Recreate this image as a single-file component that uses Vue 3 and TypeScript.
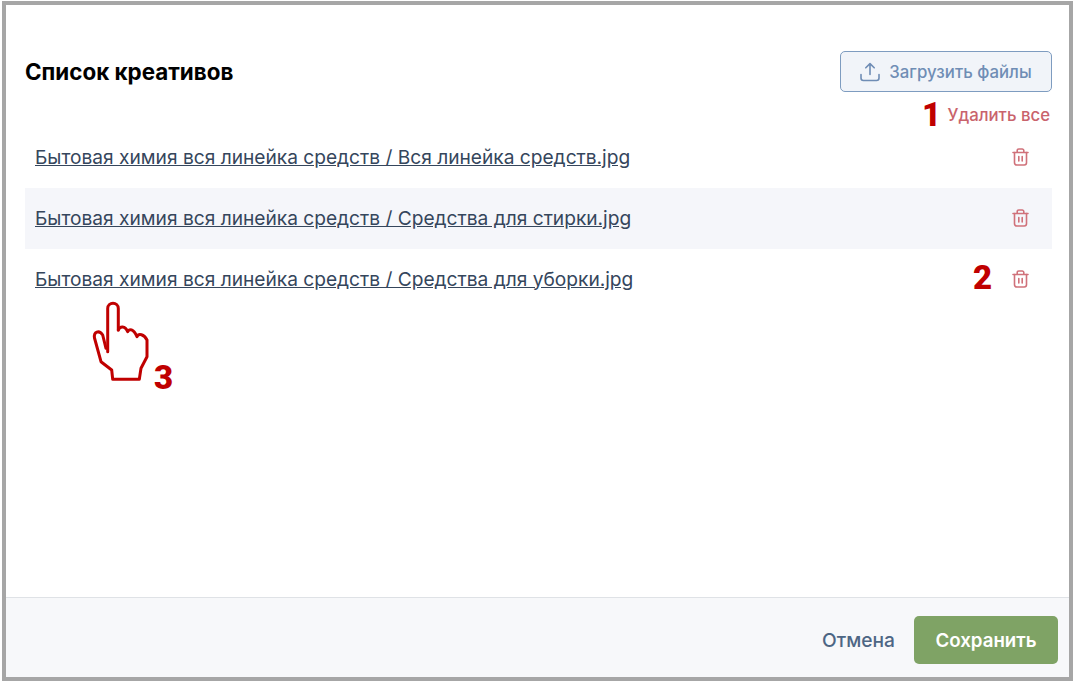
<script setup lang="ts">
const files = [
  'Бытовая химия вся линейка средств / Вся линейка средств.jpg',
  'Бытовая химия вся линейка средств / Средства для стирки.jpg',
  'Бытовая химия вся линейка средств / Средства для уборки.jpg',
]
</script>

<template>
  <div class="frame">
    <div class="content">
      <div class="head">
        <h2 class="title">Список креативов</h2>
        <button class="upload">
          <svg width="20" height="20" viewBox="0 0 20 20" fill="none" stroke="currentColor" stroke-width="1.6" stroke-linecap="round" stroke-linejoin="round">
            <path d="M10 12.5V1.8M5.8 5.8 10 1.6l4.2 4.2" />
            <path d="M1 12.5v3.6A2.4 2.4 0 0 0 3.4 18.5h13.2a2.4 2.4 0 0 0 2.4-2.4v-3.6" />
          </svg>
          Загрузить файлы
        </button>
      </div>
      <div class="remove-row"><a class="remove-all">Удалить все</a></div>
      <ul class="list">
        <li v-for="file in files" :key="file" class="row">
          <a class="file">{{ file }}</a>
          <svg class="trash" width="17" height="18" viewBox="0 0 17 18" fill="none" stroke="currentColor" stroke-width="1.6" stroke-linecap="round" stroke-linejoin="round">
            <path d="M1 4.500h15M5.200 4.500V2.600A1.600 1.600 0 0 1 6.800 1h3.400a1.600 1.600 0 0 1 1.600 1.600v1.900" />
            <path d="M2.500 4.500v10.300A2.200 2.200 0 0 0 4.700 17h7.600a2.200 2.200 0 0 0 2.200-2.200V4.500" />
            <path d="M6.800 8.500v4.500M10.200 8.500v4.500" />
          </svg>
        </li>
      </ul>
    </div>
    <div class="footer">
      <button class="cancel">Отмена</button>
      <button class="save">Сохранить</button>
    </div>

    <!-- пометки поверх скриншота -->
    <span class="mark mark-1">1</span>
    <span class="mark mark-2">2</span>
    <span class="mark mark-3">3</span>
    <svg class="hand" width="56" height="80" viewBox="0 0 56 80" fill="none" stroke="#c00000" stroke-width="3" stroke-linecap="round" stroke-linejoin="round">
      <path d="M13.700 49.700V6.500C13.700 -.5 24.300 -.5 24.300 6.500V28" />
      <path d="M24.300 28C26 24 31 23.500 33.700 29.700C35 26.500 39.500 26.500 43 34.700C44.500 31 50 32 53 38V54.700L47 66.300 45.300 77.300H18.700L17.700 68 7 59.700 .5 36C-.5 30 5 27.500 8.700 33L12 46.300" />
    </svg>
  </div>
</template>

<style scoped>
.frame {
  position: relative;
  box-sizing: border-box;
  display: flex;
  flex-direction: column;
  width: 1071px;
  height: 680px;
  margin: 1px 0 0 2px;
  border: 4px solid #a6a6a6;
  background: #fff;
  font-family: Inter, "Noto Sans", sans-serif;
}
.content {
  flex: 1;
  padding: 46px 17px 0 19px;
}
.head {
  display: flex;
  align-items: center;
  justify-content: space-between;
}
.title {
  margin: 0;
  font-size: 22.4px;
  line-height: 41px;
  font-weight: 700;
  color: #000;
}
.upload {
  display: flex;
  align-items: center;
  justify-content: center;
  gap: 9px;
  box-sizing: border-box;
  width: 212px;
  height: 41px;
  border: 1px solid #7e9cc0;
  border-radius: 5px;
  background: #f1f4f9;
  color: #6f8db5;
  font: 500 16.8px Inter, sans-serif;
}
.remove-row {
  display: flex;
  justify-content: flex-end;
  padding: 14px 2px 0 0;
}
.remove-all {
  font-size: 16.8px;
  line-height: 18px;
  font-weight: 500;
  color: #c9636c;
}
.list {
  margin: 3px 0 0;
  padding: 0;
  list-style: none;
}
.row {
  display: flex;
  align-items: center;
  justify-content: space-between;
  height: 61px;
  padding: 0 23px 0 10px;
}
.row:nth-child(2) {
  background: #f5f6fa;
}
.file {
  margin-top: -2px;
  font-size: 19.15px;
  color: #35465c;
  text-decoration: underline;
}
.trash {
  margin-top: -2px;
  color: #d0717a;
}
.footer {
  display: flex;
  align-items: center;
  justify-content: flex-end;
  gap: 19px;
  box-sizing: border-box;
  height: 80px;
  padding: 4px 11px 0 0;
  border-top: 1px solid #dfe2e6;
  background: #f7f8fa;
}
.cancel {
  border: 0;
  background: none;
  color: #4d6684;
  font: 500 19.2px Inter, sans-serif;
  padding: 0;
}
.save {
  width: 144px;
  height: 48px;
  padding-top: 2px;
  border: 0;
  border-radius: 5px;
  background: #7fa365;
  color: #fff;
  font: 600 18.7px Inter, sans-serif;
}
.mark {
  position: absolute;
  font: 900 33px/1 Roboto, sans-serif;
  color: #c00000;
}
.mark-1 { left: 916px; top: 93px; }
.mark-2 { left: 967px; top: 256px; }
.mark-3 { left: 148px; top: 356px; }
.hand {
  position: absolute;
  left: 88px;
  top: 297px;
  overflow: visible;
}
</style>

<style>
html, body { background: #fff; }
</style>
